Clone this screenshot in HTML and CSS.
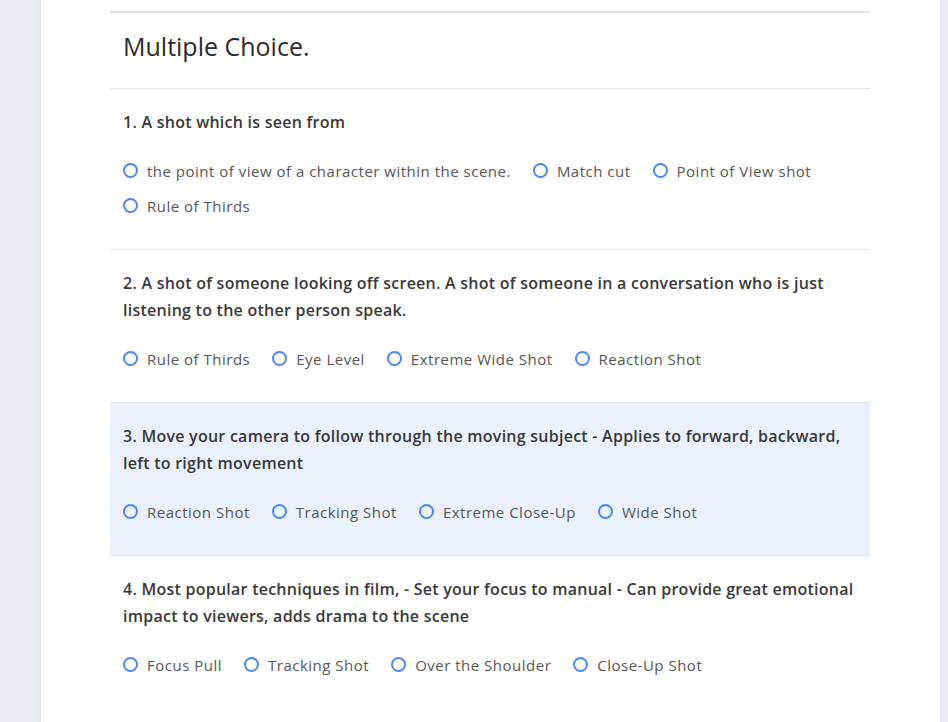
FILE: index.html
```html
<!DOCTYPE html>
<html>
<head>
<meta charset="utf-8">
<link rel="stylesheet" href="styles.css">
</head>
<body>
<div class="page">
  <div class="panel">
    <div class="quiz">
      <div class="title">Multiple Choice.</div>

      <div class="question">
        <div class="qtext">1. A shot which is seen from</div>
        <div class="options">
          <label class="opt"><span class="radio"></span>the point of view of a character within the scene.</label>
          <label class="opt"><span class="radio"></span>Match cut</label>
          <label class="opt"><span class="radio"></span>Point of View shot</label>
          <label class="opt"><span class="radio"></span>Rule of Thirds</label>
        </div>
      </div>

      <div class="question">
        <div class="qtext">2. A shot of someone looking off screen. A shot of someone in a conversation who is just listening to the other person speak.</div>
        <div class="options">
          <label class="opt"><span class="radio"></span>Rule of Thirds</label>
          <label class="opt"><span class="radio"></span>Eye Level</label>
          <label class="opt"><span class="radio"></span>Extreme Wide Shot</label>
          <label class="opt"><span class="radio"></span>Reaction Shot</label>
        </div>
      </div>

      <div class="question active">
        <div class="qtext">3. Move your camera to follow through the moving subject - Applies to forward, backward, left to right movement</div>
        <div class="options">
          <label class="opt"><span class="radio"></span>Reaction Shot</label>
          <label class="opt"><span class="radio"></span>Tracking Shot</label>
          <label class="opt"><span class="radio"></span>Extreme Close-Up</label>
          <label class="opt"><span class="radio"></span>Wide Shot</label>
        </div>
      </div>

      <div class="question">
        <div class="qtext">4. Most popular techniques in film, - Set your focus to manual - Can provide great emotional impact to viewers, adds drama to the scene</div>
        <div class="options">
          <label class="opt"><span class="radio"></span>Focus Pull</label>
          <label class="opt"><span class="radio"></span>Tracking Shot</label>
          <label class="opt"><span class="radio"></span>Over the Shoulder</label>
          <label class="opt"><span class="radio"></span>Close-Up Shot</label>
        </div>
      </div>
    </div>
  </div>
</div>
</body>
</html>
```
FILE: styles.css
```css
* { box-sizing: border-box; }
html, body {
  margin: 0;
  padding: 0;
  height: 100%;
  overflow: hidden;
}
body {
  background: #e9edf3;
  font-family: "Open Sans", "Liberation Sans", sans-serif;
  color: #2e2e2e;
}
.page {
  padding: 0 8px 0 41px;
  height: 100%;
}
.panel {
  background: #fff;
  height: 100%;
  padding: 11px 0 0 69px;
  box-shadow: -2px 0 4px rgba(0,0,0,0.04);
}
.quiz {
  width: 760px;
  border-top: 2px solid #e0e2e6;
}
.title {
  font-size: 25px;
  line-height: 30px;
  padding: 18px 13px 27px;
  color: #2b2b2b;
  border-bottom: 1px solid #e3e5e8;
}
.question {
  padding: 20px 13px 26px;
  border-bottom: 1px solid #e3e5e8;
}
.question:last-child {
  border-bottom: none;
}
.question.active {
  background: #eaf1fd;
}
.qtext {
  font-size: 16px;
  line-height: 27px;
  font-weight: 600;
  letter-spacing: 0.25px;
  color: #383838;
}
.options {
  display: flex;
  flex-wrap: wrap;
  column-gap: 22px;
  margin-top: 17px;
}
.opt {
  display: flex;
  align-items: center;
  height: 35px;
  font-size: 15px;
  letter-spacing: 0.5px;
  color: #555;
}
.radio {
  width: 15px;
  height: 15px;
  border: 2px solid #4a88f0;
  border-radius: 50%;
  margin-right: 9px;
  flex: none;
}
```
